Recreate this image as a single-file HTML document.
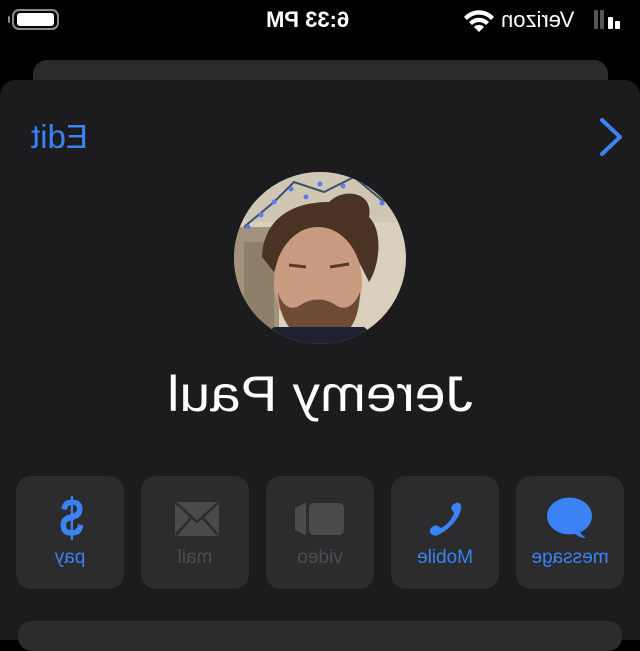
<!DOCTYPE html>
<html><head><meta charset="utf-8"><style>
*{margin:0;padding:0;box-sizing:border-box}
html,body{width:640px;height:626px;background:#000;overflow:hidden;font-family:"Liberation Sans",sans-serif}
.a{position:absolute}
.f{position:absolute;white-space:nowrap;transform:scaleX(-1);transform-origin:center}
.btn{position:absolute;top:476px;width:108px;height:113px;background:#2c2c2e;border-radius:15px}
.lbl{position:absolute;top:547px;font-size:19px;line-height:22px;white-space:nowrap;transform:scaleX(-1);text-align:center;width:108px}
</style></head><body>
<!-- status bar -->
<div class="a" style="left:12px;top:9px;width:47px;height:21px;border:2px solid #8a8a8a;border-radius:7px"></div>
<div class="a" style="left:17px;top:13px;width:37px;height:13px;background:#fff;border-radius:3px"></div>
<div class="a" style="left:8px;top:16px;width:2px;height:7px;background:#8a8a8a;border-radius:1px"></div>
<div class="f" style="left:266px;top:7px;font-size:22px;font-weight:bold;color:#fff;line-height:26px">6:33 PM</div>
<svg class="a" style="left:461px;top:8px" width="36" height="26" viewBox="0 0 36 26">
<path d="M3 9 A20 20 0 0 1 33 9 L30 12 A16 16 0 0 0 6 12Z M8 14 A14 14 0 0 1 28 14 L25 17 A10 10 0 0 0 11 17Z M13 19 A7 7 0 0 1 23 19 L18 24Z" fill="#fff"/></svg>
<div class="f" style="left:501px;top:7px;font-size:22px;color:#fff;line-height:26px">Verizon</div>
<div class="a" style="left:594px;top:10px;width:4px;height:19px;background:#555;border-radius:1px"></div>
<div class="a" style="left:600px;top:10px;width:4px;height:19px;background:#555;border-radius:1px"></div>
<div class="a" style="left:608px;top:17px;width:5px;height:12px;background:#fff;border-radius:1px"></div>
<div class="a" style="left:615px;top:21px;width:5px;height:8px;background:#fff;border-radius:1px"></div>
<!-- cards -->
<div class="a" style="left:33px;top:60px;width:575px;height:60px;background:#2a2a2c;border-radius:14px"></div>
<div class="a" style="left:0;top:80px;width:640px;height:560px;background:#1c1c1e;border-radius:16px 16px 0 0"></div>
<div class="f" style="left:31px;top:118px;font-size:33px;line-height:38px;color:#3a82f6">Edit</div>
<svg class="a" style="left:598px;top:117px" width="28" height="40" viewBox="0 0 28 40"><path d="M4 3 L22 20 L4 37" stroke="#3a82f6" stroke-width="4" fill="none" stroke-linecap="round" stroke-linejoin="round"/></svg>
<!-- avatar -->
<svg class="a" style="left:234px;top:172px" width="172" height="172" viewBox="0 0 172 172">
<defs><clipPath id="c"><circle cx="86" cy="86" r="86"/></clipPath></defs>
<g clip-path="url(#c)">
<rect width="172" height="172" fill="#d9d0bd"/>
<rect x="0" y="55" width="45" height="117" fill="#a3927c"/>
<rect x="10" y="70" width="30" height="100" fill="#8f7f6a"/>
<rect x="0" y="0" width="172" height="50" fill="#cfc6b4"/>
<path d="M10 55 L40 30 L60 10 L90 20 L120 5 L150 30" stroke="#40506a" stroke-width="2" fill="none"/>
<g fill="#5d7cf0"><circle cx="57" cy="17" r="2.5"/><circle cx="40" cy="30" r="2.5"/><circle cx="27" cy="43" r="2.5"/><circle cx="14" cy="55" r="2.5"/><circle cx="86" cy="12" r="2.5"/><circle cx="109" cy="14" r="2.5"/><circle cx="148" cy="31" r="2.5"/><circle cx="72" cy="25" r="2.5"/></g>
<path d="M28 85 C30 45 60 30 95 30 C110 15 140 20 135 45 C150 60 145 95 135 110 L120 80 C100 65 70 60 50 75 L40 100Z" fill="#4b3323"/>
<ellipse cx="84" cy="110" rx="44" ry="55" fill="#c99b80"/>
<path d="M44 120 C46 160 70 170 86 170 C105 170 125 160 126 120 C120 135 110 140 100 132 C90 126 78 126 68 132 C58 140 48 135 44 120Z" fill="#6e4b34"/>
<path d="M55 93 L72 95 M96 95 L115 92" stroke="#5a3b28" stroke-width="3"/>
<path d="M20 172 L40 155 L130 155 L150 172Z" fill="#1f2030"/>
</g></svg>
<div class="f" style="left:136px;top:366px;width:368px;text-align:center;font-size:50px;line-height:56px;color:#fff;transform:scaleX(-1.1)">Jeremy Paul</div>
<!-- buttons -->
<div class="btn" style="left:16px"></div>
<div class="btn" style="left:141px"></div>
<div class="btn" style="left:266px"></div>
<div class="btn" style="left:391px"></div>
<div class="btn" style="left:516px"></div>
<div class="f" style="left:52px;top:488px;width:40px;text-align:center;font-size:54px;line-height:60px;font-weight:bold;color:#3a82f6;transform:scaleX(-0.8)">$</div>
<svg class="a" style="left:175px;top:502px" width="44" height="34" viewBox="0 0 44 34"><rect x="0" y="0" width="44" height="34" rx="2" fill="#4a4a4c"/><path d="M1 1 L22 20 L43 1 M1 33 L16 16 M43 33 L28 16" stroke="#2c2c2e" stroke-width="2.5" fill="none"/></svg>
<svg class="a" style="left:295px;top:503px" width="49" height="32" viewBox="0 0 49 32"><path d="M0 6 L10 1 L10 31 L0 26Z" fill="#4a4a4c" stroke="#4a4a4c" stroke-linejoin="round" stroke-width="2"/><rect x="14" y="0" width="35" height="32" rx="5" fill="#4a4a4c"/></svg>
<svg class="a" style="left:428px;top:501px" width="36" height="36" viewBox="0 0 36 36"><path d="M28 2 C31 1 34 3 33 8 C31 18 22 28 10 34 C6 36 1 33 2 29 C3 26 7 23 10 25 L13 27 C19 24 24 18 26 12 L24 9 C22 6 25 3 28 2Z" fill="#3a82f6"/></svg>
<svg class="a" style="left:546px;top:497px" width="48" height="42" viewBox="0 0 48 42"><ellipse cx="23.5" cy="19" rx="22.5" ry="18.5" fill="#3a82f6"/><path d="M32 32 C34 36 37 39 40 41 C35 41 31 39 27 35Z" fill="#3a82f6"/></svg>
<div class="lbl" style="left:16px;color:#3a82f6">pay</div>
<div class="lbl" style="left:141px;color:#4d4d50">mail</div>
<div class="lbl" style="left:266px;color:#4d4d50">video</div>
<div class="lbl" style="left:391px;color:#3a82f6">Mobile</div>
<div class="lbl" style="left:516px;color:#3a82f6">message</div>
<div class="a" style="left:18px;top:621px;width:604px;height:30px;background:#2c2c2e;border-radius:14px"></div>
</body></html>
